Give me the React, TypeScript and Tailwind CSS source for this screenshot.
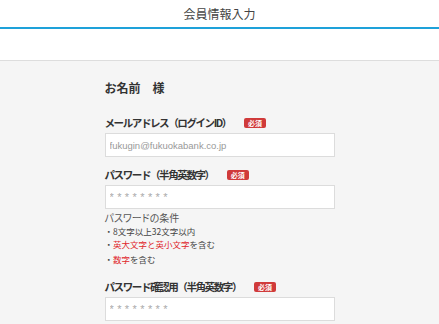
const jp = "font-['Noto_Sans_CJK_JP',sans-serif]";
const palt = "[font-feature-settings:'palt']";

function Badge() {
  return (
    <span className="ml-[13px] inline-flex h-[10px] items-center rounded-[2px] bg-[#d03a3a] px-[4px] text-[7px] font-bold tracking-normal leading-none text-white">
      必須
    </span>
  );
}

function Field({
  label,
  placeholder,
  masked,
}: {
  label: string;
  placeholder: string;
  masked?: boolean;
}) {
  return (
    <div>
      <div className="flex h-[18px] items-center text-[10.5px] font-bold text-[#333]">
        <span className="tracking-[-1.4px]">{label}</span>
        <Badge />
      </div>
      <input
        type="text"
        placeholder={placeholder}
        className={
          "mt-px block h-6 w-full border border-[#dcdcdc] bg-white px-[4px] font-['Liberation_Sans',sans-serif] text-[#333] outline-none " +
          (masked
            ? "text-[11px] tracking-[3.4px] placeholder:text-[#aaa]"
            : "text-[9.5px] placeholder:text-[#999]")
        }
      />
    </div>
  );
}

export default function App() {
  return (
    <div className={`min-h-[324px] bg-[#f5f5f5] ${jp}`}>
      <header className="border-b-2 border-[#1ea1d9] bg-white">
        <h1 className="flex h-[27px] items-center justify-center text-[12px] text-[#444]">
          会員情報入力
        </h1>
      </header>
      <div className="h-8 border-b border-[#dddddd] bg-white" />

      <main className="mx-auto w-[230px] pt-[17px]">
        <p className="h-5 text-[12px] font-bold leading-5 text-[#333]">お名前　様</p>

        <div className="mt-4">
          <Field label="メールアドレス（ログインID）" placeholder="fukugin@fukuokabank.co.jp" />
        </div>

        <div className="mt-[9px]">
          <Field label="パスワード（半角英数字）" placeholder="********" masked />
        </div>

        <div className="mt-[2px] text-[#444]">
          <p className={`text-[10px] leading-[14px] text-[#555] ${palt}`}>パスワードの条件</p>
          <ul className="text-[8.5px] leading-[13px]">
            <li>・8文字以上32文字以内</li>
            <li>
              ・<span className="text-[#e0262b]">英大文字と英小文字</span>を含む
            </li>
            <li className="mt-[2px]">
              ・<span className="text-[#e0262b]">数字</span>を含む
            </li>
          </ul>
        </div>

        <div className="mt-3">
          <Field label="パスワード確認用（半角英数字）" placeholder="********" masked />
        </div>
      </main>
    </div>
  );
}
